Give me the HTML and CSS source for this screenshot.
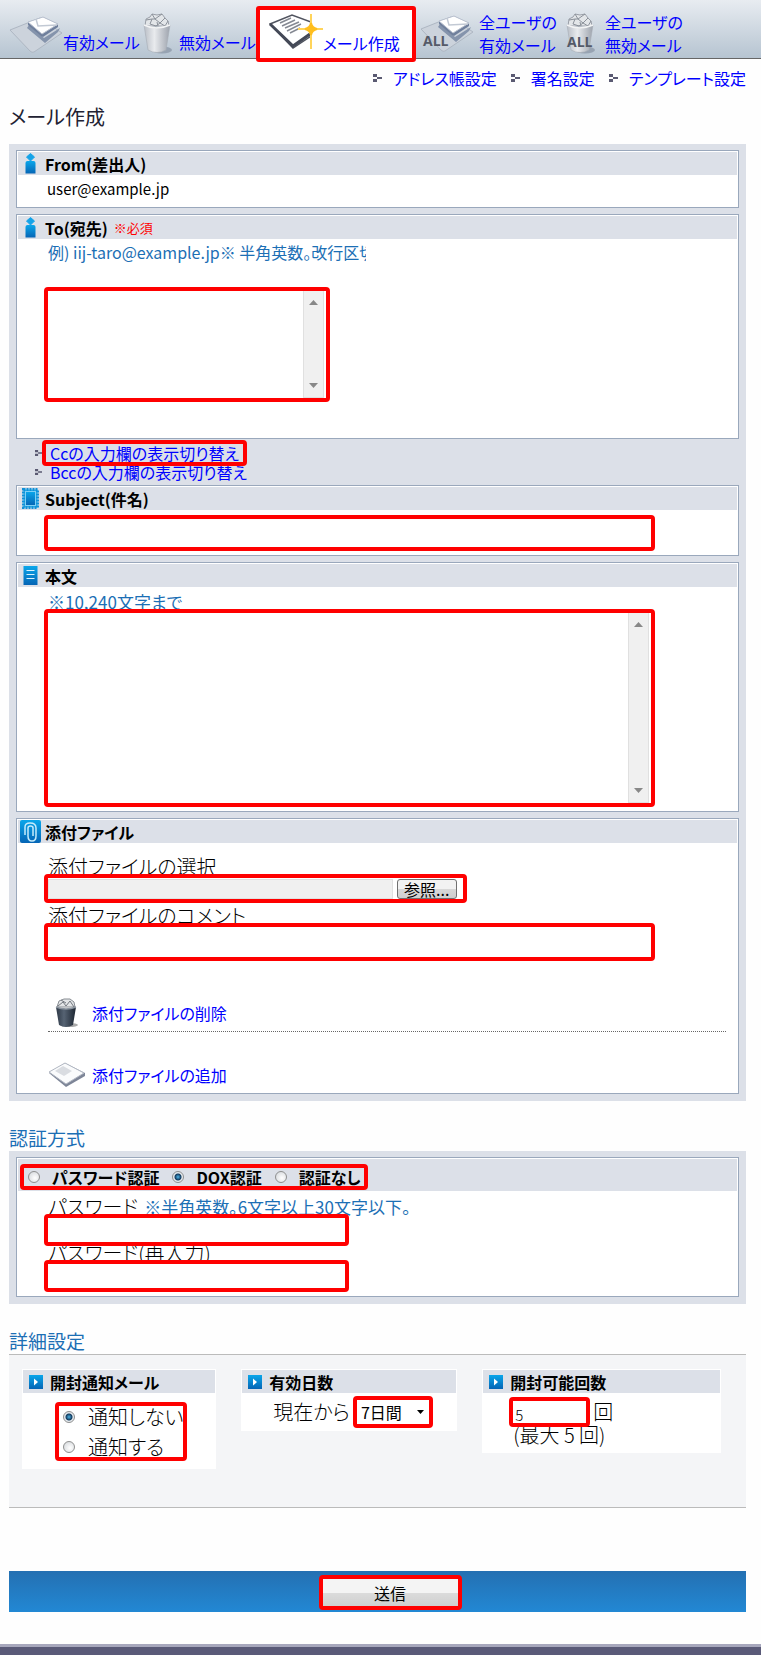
FILE: index.html
```html
<!DOCTYPE html>
<html lang="ja">
<head>
    <meta charset="UTF-8">
    <meta name="viewport" content="width=device-width, initial-scale=1.0">
    <title>メール作成</title>
    <link rel="stylesheet" href="styles.css">
</head>
<body>
    <!-- shared shapes -->
    <svg class="defs" width="0" height="0" aria-hidden="true">
        <defs>
            <linearGradient id="blue" x1="0" y1="0" x2="0" y2="1">
                <stop offset="0" stop-color="#0aa6ea"/>
                <stop offset="1" stop-color="#0565b5"/>
            </linearGradient>
            <linearGradient id="can" x1="0" y1="0" x2="1" y2="0">
                <stop offset="0" stop-color="#b9bec6"/>
                <stop offset="0.4" stop-color="#e9ebee"/>
                <stop offset="1" stop-color="#9da3ad"/>
            </linearGradient>
            <linearGradient id="darkcan" x1="0" y1="0" x2="1" y2="0">
                <stop offset="0" stop-color="#2c3745"/>
                <stop offset="0.4" stop-color="#566373"/>
                <stop offset="1" stop-color="#1b2430"/>
            </linearGradient>
            <symbol id="mail" viewBox="0 0 54 38">
                <path d="M1 14 L31 2 L53 17 L25 36 Q23 37 21 35 Z" fill="#ccd3dc" stroke="#aeb7c3"/>
                <path d="M20 9 L35 22 L51 12 L49 16 L36 27 L18 12 Z" fill="#8594ac"/>
                <path d="M19 6 L34 1 L49 8 L49 11 L34 21 L32 20 L19 9 Z" fill="#6f7f9c"/>
                <path d="M19 6 L34 1 L49 8 L33 18 Z" fill="#fff" stroke="#b9c1cf"/>
                <path d="M27 3 L29 10 L48 9" fill="none" stroke="#c2c9d4" stroke-width="1.5"/>
            </symbol>
            <symbol id="trash" viewBox="0 0 30 41">
                <ellipse cx="19" cy="37" rx="10" ry="3.5" fill="#97a3b2"/>
                <path d="M2 13 L3 6 L7 4 L9 1 L14 2 L19 1 L22 5 L25 8 L26 13 Z" fill="#e3e6e9" stroke="#9a9fa8"/>
                <path d="M3 7 L9 6 L7 11 M9 1 L12 6 L9 6 M12 6 L19 1 M12 6 L17 10 L22 5 M17 10 L13 13 L7 11 M17 10 L22 13 L25 8 M14 9 L15 13" fill="none" stroke="#8b919a"/>
                <path d="M1 12 Q13 18 27 12 L23 37 Q14 42 5 37 Z" fill="url(#can)" stroke="#a6acb5" stroke-width="0.6"/>
                <path d="M1 12 Q13 18 27 12" fill="none" stroke="#f3f4f5" stroke-width="1.5"/>
            </symbol>
            <symbol id="arrow" viewBox="0 0 14 14">
                <rect width="14" height="14" fill="url(#blue)"/>
                <path d="M5 3.5 L9 7 L5 10.5 Z" fill="#fff"/>
            </symbol>
            <symbol id="person" viewBox="0 0 12 21">
                <path d="M6 0.5 L10 4 L6 8 L2 4 Z" fill="#14a3e8" stroke="#14a3e8" stroke-linejoin="round"/>
                <path d="M1 10 Q1 8 3 8 H9 Q11 8 11 10 V20.5 H1 Z" fill="url(#blue)"/>
            </symbol>
            <symbol id="dots" viewBox="0 0 9 8">
                <path d="M0 0 H4 V3 H0 Z M4 3 H9 V5 H4 Z M0 5 H4 V8 H0 Z" fill="#5a5a72"/>
            </symbol>
        </defs>
    </svg>

    <nav class="toolbar">
        <a class="tool tool-mail" href="#">
            <svg width="54" height="38"><use href="#mail"/></svg>
            <span>有効メール</span>
        </a>
        <a class="tool tool-trash" href="#">
            <svg width="30" height="41"><use href="#trash"/></svg>
            <span>無効メール</span>
        </a>
        <a class="tool tool-active" href="#">
            <svg width="54" height="41" viewBox="0 0 54 41">
                <path d="M1 10 L23 1 L42 8 L42 22 L24 34 Z" fill="#fff" stroke="#50545f" stroke-width="1.5"/>
                <path d="M1 10 L24 32 L41 20" fill="none" stroke="#444957" stroke-width="3"/>
                <path d="M11 9 L22 4 M13 12 L26 6 M16 14 L30 8 M18 17 L32 10 M21 19 L31 14" stroke="#858993" stroke-width="1.5"/>
                <path d="M42 15 H54 M29 15 H42 M42 0 V35" stroke="#ffd45a" stroke-width="2"/>
                <path d="M42 9 Q43 14 48 15 Q43 16 42 21 Q41 16 36 15 Q41 14 42 9 Z" fill="#ffbe1e" stroke="#ffbe1e" stroke-width="2"/>
            </svg>
            <span>メール作成</span>
        </a>
        <a class="tool tool-all-mail" href="#">
            <span class="stack"><svg width="54" height="38"><use href="#mail"/></svg><b class="all">ALL</b></span>
            <span>全ユーザの<br>有効メール</span>
        </a>
        <a class="tool tool-all-trash" href="#">
            <span class="stack"><svg width="30" height="41"><use href="#trash"/></svg><b class="all">ALL</b></span>
            <span>全ユーザの<br>無効メール</span>
        </a>
    </nav>

    <ul class="subnav">
        <li><svg width="9" height="8"><use href="#dots"/></svg><a href="#">アドレス帳設定</a></li>
        <li><svg width="9" height="8"><use href="#dots"/></svg><a href="#">署名設定</a></li>
        <li><svg width="9" height="8"><use href="#dots"/></svg><a href="#">テンプレート設定</a></li>
    </ul>

    <form class="page">
        <h1>メール作成</h1>

        <div class="panel">
            <section class="box">
                <h2><svg width="12" height="21"><use href="#person"/></svg>From(差出人)</h2>
                <p class="from">user@example.jp</p>
            </section>

            <section class="box box-to">
                <h2><svg width="12" height="21"><use href="#person"/></svg><label for="to">To(宛先)</label><small>※必須</small></h2>
                <p class="hint hint-to">例) iij-taro@example.jp※ 半角英数。改行区切</p>
                <div class="mark area to">
                    <textarea id="to"></textarea>
                    <div class="scroll">
                        <svg width="9" height="5"><path d="M0 5 L4.5 0 L9 5 Z" fill="#888"/></svg>
                        <svg width="9" height="5"><path d="M0 0 L4.5 5 L9 0 Z" fill="#888"/></svg>
                    </div>
                </div>
            </section>

            <ul class="toggles">
                <li><svg width="7" height="8"><use href="#dots"/></svg><a class="mark" href="#">Ccの入力欄の表示切り替え</a></li>
                <li><svg width="7" height="8"><use href="#dots"/></svg><a href="#">Bccの入力欄の表示切り替え</a></li>
            </ul>

            <section class="box box-subject">
                <h2>
                    <svg width="17" height="21" viewBox="0 0 17 21">
                        <rect x="1.5" y="1.5" width="14" height="18" fill="#35b4ee" stroke="#1191d8" stroke-width="3" stroke-dasharray="2 1"/>
                        <rect x="3.5" y="3.5" width="10" height="14" fill="url(#blue)" stroke="#7fd0f5"/>
                    </svg>
                    <label for="subject">Subject(件名)</label>
                </h2>
                <input type="text" id="subject" class="mark wide">
            </section>

            <section class="box box-body">
                <h2>
                    <svg width="14" height="19" viewBox="0 0 14 19">
                        <rect width="14" height="19" fill="url(#blue)"/>
                        <path d="M3 4.5 H11 M3 8.5 H11 M3 12.5 H11" stroke="#d9f2fd"/>
                    </svg>
                    <label for="body">本文</label>
                </h2>
                <p class="hint">※10,240文字まで</p>
                <div class="mark area wide body">
                    <textarea id="body"></textarea>
                    <div class="scroll">
                        <svg width="9" height="5"><path d="M0 5 L4.5 0 L9 5 Z" fill="#888"/></svg>
                        <svg width="9" height="5"><path d="M0 0 L4.5 5 L9 0 Z" fill="#888"/></svg>
                    </div>
                </div>
            </section>

            <section class="box box-files">
                <h2>
                    <svg width="21" height="23" viewBox="0 0 21 23">
                        <rect width="21" height="23" rx="2" fill="url(#blue)"/>
                        <path d="M5 15 V7 Q5 3 10 3 Q16 3 16 8 V16 Q16 21 12 21 Q8 21 8 16 V8 Q8 6 10.5 6 Q13 6 13 8 V16" fill="none" stroke="#c5ebfb" stroke-width="1.5"/>
                    </svg>
                    添付ファイル
                </h2>
                <label class="label" for="file">添付ファイルの選択</label>
                <div class="mark file">
                    <input type="text" id="file" readonly>
                    <button type="button">参照...</button>
                </div>
                <label class="label" for="comment">添付ファイルのコメント</label>
                <input type="text" id="comment" class="mark wide comment">
                <div class="file-link file-delete">
                    <svg width="38" height="30" viewBox="0 0 38 30">
                        <ellipse cx="21" cy="27" rx="9" ry="2" fill="#aaa"/>
                        <path d="M9 9 L11 3 L16 1 L22 1 L26 4 L27 9 Z" fill="#e3e5e7" stroke="#888d93"/>
                        <path d="M10 8 L15 4 L18 8 L22 3 L26 9 M13 2 L18 5" fill="none" stroke="#73787f"/>
                        <path d="M8 9 Q18 13 28 9 L25 27 Q18 31 11 27 Z" fill="url(#darkcan)"/>
                        <path d="M8 9 Q18 13 28 9" fill="none" stroke="#8b949f" stroke-width="1.5"/>
                    </svg>
                    <a href="#">添付ファイルの削除</a>
                </div>
                <div class="file-link file-add">
                    <svg width="38" height="26" viewBox="0 0 38 26">
                        <path d="M1 11 L17 1 L37 11 V14 L18 25 Z" fill="#7d8597"/>
                        <path d="M1 10 L17 1 L36 11 L18 22 Z" fill="#fafbfc" stroke="#b2b8c3"/>
                        <path d="M7 9 L15 4 L24 9 L16 14 Z" fill="#d9dce1"/>
                    </svg>
                    <a href="#">添付ファイルの追加</a>
                </div>
            </section>
        </div>

        <h3>認証方式</h3>
        <div class="panel">
            <section class="box box-auth">
                <div class="auth-head">
                    <div class="mark auth">
                        <label><input type="radio" name="auth">パスワード認証</label>
                        <label><input type="radio" name="auth" checked>DOX認証</label>
                        <label><input type="radio" name="auth">認証なし</label>
                    </div>
                </div>
                <div class="label-row">
                    <label class="label" for="pass1">パスワード</label>
                    <span class="hint">※半角英数。6文字以上30文字以下。</span>
                </div>
                <input type="password" id="pass1" class="mark pass">
                <label class="label" for="pass2">パスワード(再入力)</label>
                <input type="password" id="pass2" class="mark pass">
            </section>
        </div>

        <h3>詳細設定</h3>
        <div class="options">
            <section class="card card-notify">
                <h4><svg width="14" height="14"><use href="#arrow"/></svg>開封通知メール</h4>
                <div class="mark notify">
                    <label><input type="radio" name="notify" checked>通知しない</label>
                    <label><input type="radio" name="notify">通知する</label>
                </div>
            </section>
            <section class="card card-days">
                <h4><svg width="14" height="14"><use href="#arrow"/></svg>有効日数</h4>
                <div class="row">
                    <label for="days">現在から</label>
                    <select id="days" class="mark"><option>7日間</option></select>
                </div>
            </section>
            <section class="card card-count">
                <h4><svg width="14" height="14"><use href="#arrow"/></svg>開封可能回数</h4>
                <div class="row">
                    <input type="text" id="count" class="mark" value="5">
                    <label for="count">回</label>
                </div>
                <p>(最大 5 回)</p>
            </section>
        </div>

        <div class="submit">
            <button type="submit">送信</button>
        </div>
    </form>

    <footer></footer>
</body>
</html>
```
FILE: styles.css
```css
* {
    box-sizing: border-box;
}

body {
    margin: 0;
    background-color: #fefefe;
    color: #000;
    font-family: "Noto Sans CJK JP", sans-serif;
    font-size: 16px;
    font-feature-settings: "palt";
}

h1, h2, h3, h4, p, ul {
    margin: 0;
    padding: 0;
}

ul {
    list-style: none;
}

a {
    color: #00f;
    text-decoration: none;
}

svg {
    display: block;
    flex: none;
}

input, textarea, select, button {
    font: inherit;
    color: inherit;
    font-feature-settings: inherit;
    margin: 0;
}

.defs {
    position: absolute;
}

/* highlighted controls */
.mark {
    position: relative;
    display: block;
    border: 4px solid #f00;
    border-radius: 4px;
    background-color: #fff;
}

/* toolbar */
.toolbar {
    display: flex;
    align-items: flex-start;
    height: 59px;
    padding-left: 9px;
    border-bottom: 1px solid #666;
    background: linear-gradient(#e8ecf1, #b6c4d1);
}

.tool {
    display: flex;
    align-items: flex-end;
    flex: none;
    padding-top: 13px;
    line-height: 23px;
    white-space: nowrap;
}

.tool-mail {
    width: 134px;
    height: 54px;
}

.tool-trash {
    width: 113px;
    height: 54px;
    gap: 6px;
}

.tool-active {
    position: relative;
    width: 160px;
    height: 56px;
    margin: 6px 4px 0 0;
    padding: 0 0 3px 9px;
    border: 4px solid #f00;
    border-radius: 3px;
    background-color: #fff;
}

.tool-all-mail {
    width: 146px;
    gap: 5px;
}

.tool-all-trash {
    gap: 9px;
}

.tool-all-mail, .tool-all-trash {
    align-items: center;
    height: 58px;
    padding-top: 9px;
}

.stack {
    position: relative;
}

.all {
    position: absolute;
    left: 3px;
    bottom: 5px;
    color: #555a68;
    font: bold 14px/14px "Open Sans", sans-serif;
}

.tool-all-trash .all {
    left: 1px;
}

.subnav {
    display: flex;
    justify-content: flex-end;
    gap: 14px;
    padding: 6px 15px 0 0;
    line-height: 26px;
}

.subnav li {
    display: flex;
    align-items: center;
    gap: 11px;
}

/* page */
.page {
    padding: 0 15px 0 9px;
}

h1 {
    padding: 12px 0 13px;
    color: #223;
    font-size: 20px;
    line-height: 28px;
    font-weight: 400;
}

h3 {
    padding-top: 23px;
    color: #1c6fb5;
    font-size: 19px;
    line-height: 27px;
    font-weight: 400;
}

.panel {
    padding: 6px 7px 7px;
    background-color: #dce0e8;
}

.box {
    padding: 1px 1px 4px;
    border: 1px solid #9aa8bc;
    background-color: #fff;
}

.box + .box {
    margin-top: 6px;
}

.box > :not(h2):not(.auth-head) {
    margin-left: 26px;
}

.box h2 {
    display: flex;
    align-items: center;
    height: 23px;
    background-color: #dce0e8;
    font-size: 16px;
    font-weight: 700;
}

.box h2 svg {
    width: 25px;
    margin-right: 2px;
}

.box h2 small {
    padding-left: 6px;
    color: #f00;
    font-size: 13px;
    font-weight: 400;
}

.box .from {
    padding-left: 3px;
    line-height: 28px;
    font-size: 15px;
}

.hint {
    color: #1c6fb5;
    padding-left: 4px;
    font-size: 17px;
    line-height: 14px;
}

.label {
    display: block;
    padding-left: 4px;
    font-size: 20px;
    line-height: 14px;
    font-weight: 300;
}

.box-to {
    padding-bottom: 36px;
}

.hint-to {
    max-width: 322px;
    overflow: hidden;
    font-size: 16px;
    line-height: 26px;
    white-space: nowrap;
}

.area {
    display: flex;
}

.area textarea {
    flex: 1;
    min-width: 0;
    padding: 2px;
    border: 0;
    outline: 0;
    resize: none;
    background: transparent;
}

.scroll {
    display: flex;
    flex-direction: column;
    align-items: center;
    justify-content: space-between;
    width: 21px;
    margin-right: 2px;
    padding: 9px 0;
    border: 1px solid #e0e0e0;
    border-top: 0;
    background-color: #f0f0f0;
}

.to {
    width: 286px;
    height: 115px;
    margin-top: 22px;
}

.wide {
    width: 611px;
    max-width: 96%;
}

.toggles {
    padding: 1px 0 7px 19px;
}

.toggles li {
    display: flex;
    align-items: center;
    line-height: 12px;
}

.toggles a {
    padding-left: 8px;
    white-space: nowrap;
}

.toggles .mark {
    padding: 0 4px;
    background-color: transparent;
    line-height: 18px;
}

.box-subject input {
    height: 36px;
    margin-top: 5px;
}

.box-body .hint {
    padding-top: 8px;
}

.body {
    height: 198px;
}

.box-files .label {
    padding-top: 6px;
}

.box-files h2 + .label {
    padding-top: 17px;
}

.file {
    display: flex;
    align-items: center;
    gap: 4px;
    width: 423px;
    height: 29px;
}

.file input {
    flex: 1;
    min-width: 0;
    height: 20px;
    border: 1px solid #e0e0e0;
    background-color: #f0f0f0;
}

.file button {
    width: 60px;
    height: 20px;
    margin-right: 6px;
    padding: 0 8px 0 6px;
    border: 1px solid #707070;
    border-radius: 3px;
    background: linear-gradient(#f2f2f2 50%, #d8d8d8 50%, #cfcfcf);
    line-height: 16px;
    white-space: nowrap;
}

.comment {
    height: 38px;
}

.file-link {
    display: flex;
    align-items: center;
    gap: 6px;
}

.box > .file-link:not(h2):not(.auth-head) {
    margin-left: 30px;
}

.file-delete {
    height: 71px;
    margin-right: 11px;
    padding-top: 34px;
    border-bottom: 1px dotted #666;
}

.file-add {
    height: 57px;
    padding-top: 28px;
}

/* radios */
input[type="radio"] {
    appearance: none;
    flex: none;
    width: 12px;
    height: 12px;
    border: 1px solid #8e8f8f;
    border-radius: 50%;
    background: radial-gradient(circle at 60% 60%, #fff, #d0d4d8);
}

input[type="radio"]:checked {
    background: radial-gradient(circle, #4db5e8 0, #123a5e 3px, #e6eaee 4px);
}

.auth-head {
    padding: 5px 0 1px 2px;
    background-color: #dce0e8;
}

.auth {
    display: inline-flex;
    align-items: center;
    gap: 13px;
    height: 26px;
    padding: 0 4px;
    background-color: transparent;
    font-weight: 700;
    vertical-align: top;
}

.auth label {
    display: flex;
    align-items: center;
    gap: 12px;
    white-space: nowrap;
}

.label-row {
    display: flex;
    gap: 2px;
    padding-top: 9px;
}

.pass {
    width: 305px;
    height: 32px;
}

/* options */
.options {
    display: flex;
    align-items: flex-start;
    gap: 25px;
    min-height: 154px;
    padding: 14px 25px 36px 13px;
    border-top: 1px solid #bbb;
    border-bottom: 1px solid #bbb;
    background-color: #f4f5f7;
    font-size: 20px;
    font-weight: 300;
}

.card {
    padding: 1px;
    background-color: #fff;
}

.card-notify {
    flex: 194;
    padding-bottom: 8px;
}

.card-days {
    flex: 216;
    padding-bottom: 3px;
}

.card-count {
    flex: 239;
    padding-bottom: 10px;
}

.card h4 {
    display: flex;
    align-items: center;
    gap: 7px;
    height: 23px;
    padding-left: 6px;
    background-color: #dce0e8;
    font-size: 16px;
    font-weight: 700;
}

.notify {
    display: flex;
    flex-direction: column;
    gap: 8px;
    width: 132px;
    height: 59px;
    margin: 9px 0 0 32px;
    padding-left: 4px;
}

.notify label {
    display: flex;
    align-items: center;
    gap: 13px;
    line-height: 22px;
    white-space: nowrap;
}

.row {
    display: flex;
    align-items: center;
    gap: 3px;
    padding-top: 3px;
}

.card-days .row {
    padding-left: 31px;
}

.card-days label {
    white-space: nowrap;
    line-height: 20px;
}

.card-days select {
    appearance: none;
    width: 80px;
    height: 32px;
    padding: 0 4px;
    font-size: 16px;
    font-weight: 400;
    background: #fff url("data:image/svg+xml,<svg xmlns='http://www.w3.org/2000/svg' width='7' height='4'><path d='M0 0H7L3.5 4Z'/></svg>") no-repeat right 5px center;
}

.card-count .row {
    padding: 4px 0 0 26px;
}

.card-count input {
    width: 81px;
    height: 30px;
    padding: 4px 2px 0;
    font-size: 15px;
}

.card-count label {
    line-height: 20px;
}

.card-count p {
    padding-left: 30px;
    line-height: 16px;
}

/* submit */
.submit {
    display: flex;
    justify-content: center;
    margin-top: 63px;
    padding: 4px 0 2px 25px;
    background: linear-gradient(#2470b2, #2288d4);
}

.submit button {
    width: 143px;
    height: 35px;
    border: 4px solid #f00;
    border-radius: 4px;
    background: linear-gradient(#f4f4f4 50%, #dcdcdc 50%, #cfcfcf);
    line-height: 24px;
}

footer {
    height: 11px;
    margin-top: 32px;
    border-top: 3px solid #a8a8bd;
    background-color: #5a5a78;
}
```
